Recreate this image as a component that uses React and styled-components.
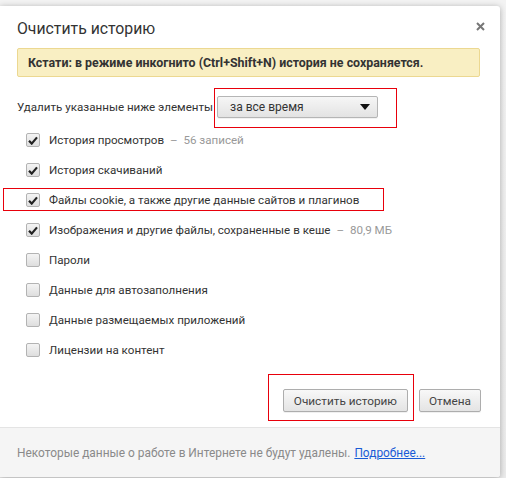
import React from 'react'
import styled, { createGlobalStyle, css } from 'styled-components'

const font = `Roboto, 'Open Sans', 'Liberation Sans', Arial, sans-serif`

const GlobalStyle = createGlobalStyle`
  html, body {
    margin: 0;
    padding: 0;
    background: #ececec;
  }
  body {
    font-family: ${font};
    color: #333;
  }
`

const items = [
  { title: 'История просмотров', note: '56 записей', checked: true },
  { title: 'История скачиваний', checked: true },
  { title: 'Файлы cookie, а также другие данные сайтов и плагинов', checked: true, marked: true },
  { title: 'Изображения и другие файлы, сохраненные в кеше', note: '80,9 МБ', checked: true },
  { title: 'Пароли' },
  { title: 'Данные для автозаполнения' },
  { title: 'Данные размещаемых приложений' },
  { title: 'Лицензии на контент' }
]

const Page = styled.div`
  padding-top: 6px;
  height: 472px;
  overflow: hidden;
  background: linear-gradient(#f3f3f3, #ececec);
`

const Dialog = styled.div`
  position: relative;
  width: 500px;
  height: 471px;
  background: #fff;
  border-radius: 0 3px 3px 0;
  box-shadow: 0 1px 6px rgba(0, 0, 0, 0.3);
  display: flex;
  flex-direction: column;
  overflow: hidden;
`

const Close = styled.button`
  position: absolute;
  top: 10px;
  right: 10px;
  width: 20px;
  height: 20px;
  padding: 0;
  border: 0;
  background: none;
  display: flex;
  align-items: center;
  justify-content: center;
`

const Title = styled.h1`
  margin: 0;
  padding: 13px 17px 0;
  font-size: 15.8px;
  line-height: 20px;
  font-weight: 400;
  color: #333;
`

const Banner = styled.div`
  margin: 9px 20px 0 17px;
  height: 29px;
  box-sizing: border-box;
  padding: 0 10px;
  background: #f9efc3;
  border: 1px solid #ecd891;
  border-radius: 2px;
  font-size: 12.4px;
  font-weight: 700;
  line-height: 27px;
  color: #333;
`

const SelectRow = styled.div`
  margin-top: 19px;
  padding-left: 17px;
  display: flex;
  align-items: center;
  font-size: 11.6px;
  color: #333;
`

const Marked = styled.span`
  position: relative;
  display: inline-flex;
`

const Highlight = styled.span`
  position: absolute;
  border: 1px solid #e8000b;
  pointer-events: none;
  ${p => css`
    top: ${p.$top}px;
    right: ${p.$right}px;
    bottom: ${p.$bottom}px;
    left: ${p.$left}px;
  `}
`

const Select = styled.div`
  margin-left: 4px;
  width: 161px;
  height: 22px;
  box-sizing: border-box;
  padding: 0 7px 0 12px;
  display: flex;
  align-items: center;
  justify-content: space-between;
  border: 1px solid #b5b5b5;
  border-radius: 2px;
  background: linear-gradient(#f6f6f6, #e3e3e3);
  box-shadow: 0 1px 0 rgba(0, 0, 0, 0.05);
  font-size: 12px;
  color: #333;
`

const List = styled.div`
  margin-top: 7px;
  display: flex;
  flex-direction: column;
`

const Row = styled.label`
  position: relative;
  height: 30px;
  padding-left: 26px;
  display: flex;
  align-items: center;
  gap: 9px;
  font-size: 11.6px;
  color: #333;
`

const Box = styled.span`
  width: 12px;
  height: 12px;
  flex: 0 0 auto;
  border: 1px solid #b3b3b3;
  border-radius: 2px;
  background: linear-gradient(#f4f4f4, #dedede);
  display: flex;
  align-items: center;
  justify-content: center;
`

const Note = styled.span`
  color: #999;
  margin-left: 6px;
`

const Actions = styled.div`
  margin-top: 24px;
  padding-right: 19px;
  display: flex;
  justify-content: flex-end;
  gap: 11px;
`

const Button = styled.button`
  height: 23px;
  box-sizing: border-box;
  padding: 0 ${p => p.$pad}px;
  border: 1px solid #adadad;
  border-radius: 2px;
  background: linear-gradient(#f8f8f8, #e4e4e4);
  box-shadow: 0 1px 0 rgba(0, 0, 0, 0.06);
  font-family: ${font};
  font-size: 11.8px;
  color: #444;
  cursor: pointer;
`

const Footer = styled.div`
  margin-top: auto;
  height: 50px;
  box-sizing: border-box;
  padding: 0 17px;
  display: flex;
  align-items: center;
  border-top: 1px solid #e4e4e4;
  background: #f5f5f5;
  font-size: 11.9px;
  color: #8a8a8a;
  a {
    margin-left: 4px;
    color: #1a5bd6;
    text-decoration: underline;
  }
`

const Check = () => (
  <svg width="10" height="9" viewBox="0 0 10 9">
    <path d="M1 4.8 L3.7 7.6 L9 1.4" fill="none" stroke="#222" strokeWidth="2.2" />
  </svg>
)

export default function App () {
  return (
    <Page>
      <GlobalStyle />
      <Dialog>
        <Close aria-label="close">
          <svg width="9" height="9" viewBox="0 0 9 9">
            <path d="M1 1 L8 8 M8 1 L1 8" stroke="#777" strokeWidth="2" />
          </svg>
        </Close>
        <Title>Очистить историю</Title>
        <Banner>Кстати: в режиме инкогнито (Ctrl+Shift+N) история не сохраняется.</Banner>
        <SelectRow>
          Удалить указанные ниже элементы
          <Marked>
            <Select>
              за все время
              <svg width="10" height="6" viewBox="0 0 10 6">
                <path d="M0 0 H10 L5 6 Z" fill="#111" />
              </svg>
            </Select>
            <Highlight $top={-8} $right={-19} $bottom={-10} $left={1} />
          </Marked>
        </SelectRow>
        <List>
          {items.map(item => (
            <Row key={item.title}>
              <Box>{item.checked && <Check />}</Box>
              <span>
                {item.title}
                {item.note && <Note>–&nbsp; {item.note}</Note>}
              </span>
              {item.marked && <Highlight $top={3} $bottom={4} $left={3} style={{ right: 'auto', width: 379 }} />}
            </Row>
          ))}
        </List>
        <Actions>
          <Marked>
            <Button $pad={10}>Очистить историю</Button>
            <Highlight $top={-15} $right={-6} $bottom={-9} $left={-15} />
          </Marked>
          <Button $pad={9}>Отмена</Button>
        </Actions>
        <Footer>
          Некоторые данные о работе в Интернете не будут удалены.
          <a href="#more">Подробнее...</a>
        </Footer>
      </Dialog>
    </Page>
  )
}
